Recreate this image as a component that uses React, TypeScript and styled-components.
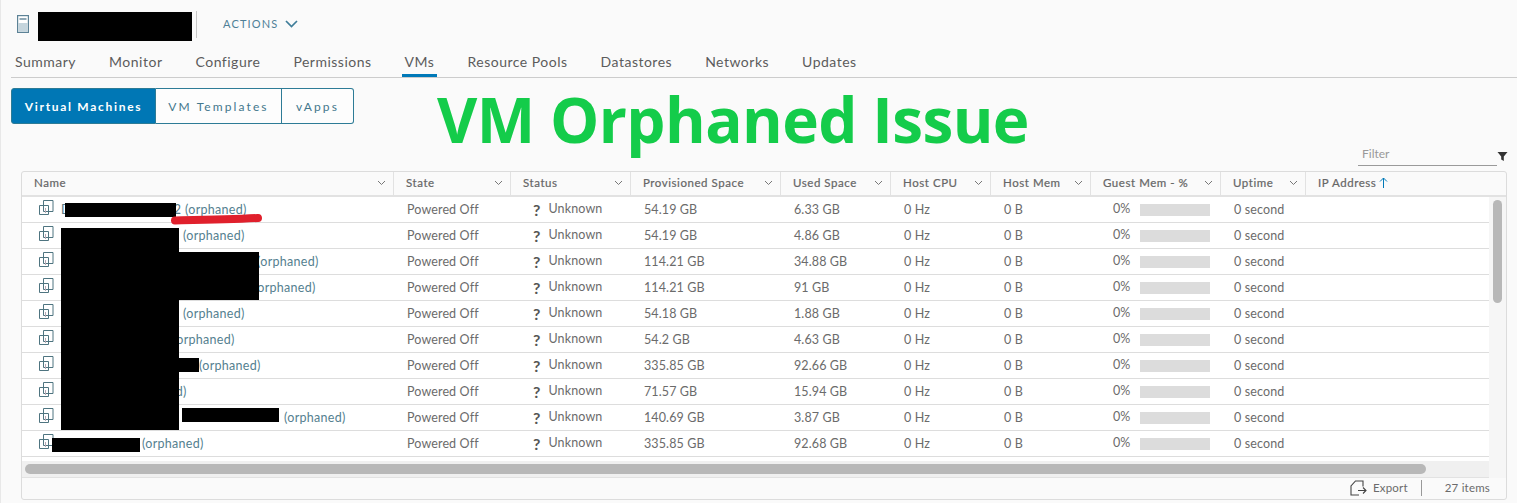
import React from "react";
import styled, { createGlobalStyle } from "styled-components";

const GlobalStyle = createGlobalStyle`
    html, body {
        margin: 0;
        padding: 0;
        background: #fafafa;
    }
    body {
        font-family: "Lato", "Liberation Sans", sans-serif;
        color: #666;
    }
`;

const COLUMNS = "372px 117px 120px 150px 110px 100px 100px 130px 85px 1fr";

const Page = styled.div`
    position: relative;
    width: 1517px;
    height: 503px;
    overflow: hidden;
    box-sizing: border-box;
    border-left: 1px solid #e8e8e8;
`;
const TopBar = styled.header`
    height: 39px;
    padding-top: 11px;
    display: flex;
    align-items: flex-start;
    box-sizing: content-box;
`;
const HostIcon = styled.svg`
    width: 12px;
    height: 18px;
    margin: 4px 0 0 16px;
`;
const TitleSlot = styled.div`
    width: 158px;
    height: 27px;
    border-right: 1px solid #c8c8c8;
    margin-left: 9px;
`;
const Actions = styled.button`
    margin: 6px 0 0 26px;
    padding: 0;
    border: 0;
    background: none;
    display: flex;
    align-items: center;
    gap: 7px;
    font: 11px "Lato", sans-serif;
    letter-spacing: 1.15px;
    color: #4f7f97;
`;
const Tabs = styled.nav`
    height: 28px;
    margin-left: 10px;
    padding-left: 4px;
    display: flex;
    gap: 33px;
    border-bottom: 1px solid #ccc;
    box-sizing: border-box;
`;
const Tab = styled.a<{ $current?: boolean }>`
    height: 27px;
    padding: 0 3px;
    margin: 0 -3px;
    line-height: 24px;
    font-size: 14px;
    letter-spacing: 0.5px;
    color: #5c5c5c;
    box-sizing: border-box;
    border-bottom: ${(props) => (props.$current ? "3px solid #0079b8" : "0")};
`;
const Switcher = styled.div`
    display: inline-flex;
    margin: 10px 0 0 10px;
    height: 36px;
    vertical-align: top;
`;
const SwitchButton = styled.button<{ $active?: boolean; $width: number }>`
    width: ${(props) => props.$width}px;
    height: 36px;
    padding: 0;
    border: 1px solid #2d7b96;
    border-left-width: ${(props) => (props.$active ? "1px" : "0")};
    background: ${(props) => (props.$active ? "#0077b5" : "#fdfdfd")};
    color: ${(props) => (props.$active ? "#fff" : "#43778c")};
    font: ${(props) => (props.$active ? 700 : 400)} 12px "Lato", sans-serif;
    letter-spacing: ${(props) => (props.$active ? "1.7px" : "2.1px")};
    &:first-child {
        border-radius: 3px 0 0 3px;
    }
    &:last-child {
        border-radius: 0 3px 3px 0;
    }
`;
const Annotation = styled.div`
    position: absolute;
    left: 436px;
    top: 77px;
    font: 700 62px "Open Sans", sans-serif;
    letter-spacing: -0.6px;
    color: #14cc4a;
    white-space: nowrap;
`;
const FilterRow = styled.div`
    margin-top: 21px;
    height: 21px;
    padding-right: 9px;
    display: flex;
    justify-content: flex-end;
    align-items: flex-end;
`;
const FilterInput = styled.div`
    width: 135px;
    height: 21px;
    padding-left: 4px;
    border-bottom: 1px solid #9a9a9a;
    font-size: 12px;
    line-height: 19px;
    color: #999;
`;
const FilterIcon = styled.svg`
    width: 11px;
    height: 11px;
    margin: 0 0 4px 0;
`;
const Grid = styled.section`
    margin: 5px 0 0 20px;
    width: 1486px;
    height: 329px;
    border: 1px solid #dcdcdc;
    border-radius: 3px;
    box-sizing: border-box;
    display: flex;
    flex-direction: column;
`;
const HeaderRow = styled.div`
    display: grid;
    grid-template-columns: ${COLUMNS};
    height: 23px;
    flex: none;
    border-bottom: 2px solid #e2e2e2;
    box-sizing: content-box;
`;
const HeaderCell = styled.div`
    display: flex;
    align-items: center;
    justify-content: space-between;
    padding: 0 7px 2px 12px;
    border-right: 1px solid #e2e2e2;
    font-size: 11.5px;
    letter-spacing: 0.55px;
    -webkit-text-stroke: 0.2px #666;
    color: #666;
    white-space: nowrap;
    &:last-child {
        border-right: 0;
        justify-content: flex-start;
        gap: 3px;
    }
`;
const Body = styled.div`
    flex: 1;
    min-height: 0;
    display: grid;
    grid-template-columns: 1fr 17px;
`;
const Left = styled.div`
    min-width: 0;
    display: flex;
    flex-direction: column;
`;
const Rows = styled.div`
    height: 264px;
    overflow: hidden;
    background: #fff;
`;
const Row = styled.div`
    display: grid;
    grid-template-columns: ${COLUMNS};
    height: 26px;
    border-bottom: 1px solid #ddd;
    box-sizing: border-box;
    align-items: center;
    font-size: 12.5px;
    letter-spacing: 0.12px;
    color: #6b6b6b;
    background: #fff;
`;
const NameCell = styled.div`
    display: flex;
    align-items: center;
    padding-left: 17px;
    white-space: nowrap;
`;
const VmIcon = styled.svg`
    width: 15px;
    height: 15px;
    margin: -5px 7px 0 0;
    flex: none;
`;
const HiddenName = styled.span<{ $width: number }>`
    width: ${(props) => props.$width}px;
    flex: none;
    display: flex;
    justify-content: space-between;
    padding-right: 4px;
    box-sizing: border-box;
    color: #557a88;
`;
const Orphaned = styled.a`
    color: #557f90;
    letter-spacing: 0.3px;
`;
const Cell = styled.div`
    padding-left: 13px;
    white-space: nowrap;
`;
const StatusCell = styled(Cell)`
    padding-left: 22px;
    display: flex;
    align-items: center;
    gap: 8px;
    margin-top: -2px;
`;
const Question = styled.b`
    font-size: 16px;
    line-height: 16px;
    color: #555;
    margin-top: 3px;
`;
const MemCell = styled.div`
    padding-left: 22px;
    display: flex;
    align-items: center;
    gap: 9px;
    margin-top: -2px;
`;
const MemBar = styled.div`
    width: 70px;
    height: 12px;
    margin-top: 2px;
    background: #dcdcdc;
`;
const PartialIcon = styled(VmIcon)`
    margin-top: 6px;
`;
const HScroll = styled.div`
    height: 17px;
    background: #f0f0f0;
    padding: 3px 0 0 3px;
    box-sizing: border-box;
    border-bottom: 1px solid #e2e2e2;
`;
const HThumb = styled.div`
    width: 1401px;
    height: 10px;
    border-radius: 5px;
    background: #b8b8b8;
`;
const VScroll = styled.div`
    background: #f6f6f6;
    padding: 3px 0 0 4px;
`;
const VThumb = styled.div`
    width: 9px;
    height: 103px;
    border-radius: 5px;
    background: #b8b8b8;
`;
const Footer = styled.footer`
    flex: none;
    height: 23px;
    display: flex;
    justify-content: flex-end;
    align-items: center;
    padding-right: 16px;
    font-size: 11.5px;
    letter-spacing: 0.2px;
    color: #6b6b6b;
`;
const ExportIcon = styled.svg`
    width: 17px;
    height: 16px;
    margin-right: 6px;
`;
const FooterDivider = styled.div`
    width: 1px;
    height: 16px;
    margin: 0 23px 0 13px;
    background: #999;
`;
const Redaction = styled.div<{ $x: number; $y: number; $w: number; $h: number }>`
    position: absolute;
    left: ${(props) => props.$x - 1}px;
    top: ${(props) => props.$y}px;
    width: ${(props) => props.$w}px;
    height: ${(props) => props.$h}px;
    background: #000;
`;
const RedMark = styled.svg`
    position: absolute;
    left: 169px;
    top: 212px;
    width: 94px;
    height: 14px;
`;

const tabs = [
    "Summary",
    "Monitor",
    "Configure",
    "Permissions",
    "VMs",
    "Resource Pools",
    "Datastores",
    "Networks",
    "Updates",
];
const headers = [
    "Name",
    "State",
    "Status",
    "Provisioned Space",
    "Used Space",
    "Host CPU",
    "Host Mem",
    "Guest Mem - %",
    "Uptime",
];

interface Ivm {
    nameWidth: number;
    head?: string;
    tail?: string;
    provisioned: string;
    used: string;
}

const vms: Ivm[] = [
    { nameWidth: 124, head: "D", tail: "2", provisioned: "54.19 GB", used: "6.33 GB" },
    { nameWidth: 122, provisioned: "54.19 GB", used: "4.86 GB" },
    { nameWidth: 196, provisioned: "114.21 GB", used: "34.88 GB" },
    { nameWidth: 193, provisioned: "114.21 GB", used: "91 GB" },
    { nameWidth: 122, provisioned: "54.18 GB", used: "1.88 GB" },
    { nameWidth: 112, provisioned: "54.2 GB", used: "4.63 GB" },
    { nameWidth: 138, provisioned: "335.85 GB", used: "92.66 GB" },
    { nameWidth: 64, provisioned: "71.57 GB", used: "15.94 GB" },
    { nameWidth: 223, provisioned: "140.69 GB", used: "3.87 GB" },
    { nameWidth: 81, provisioned: "335.85 GB", used: "92.68 GB" },
];

const redactions = [
    { x: 38, y: 12, w: 154, h: 29 },
    { x: 65, y: 203, w: 111, h: 14 },
    { x: 61, y: 228, w: 118, h: 202 },
    { x: 179, y: 252, w: 80, h: 48 },
    { x: 179, y: 358, w: 20, h: 14 },
    { x: 182, y: 408, w: 97, h: 14 },
    { x: 52, y: 438, w: 88, h: 14 },
];

const Chevron = () => (
    <svg width="9" height="6" viewBox="0 0 9 6">
        <path d="M1 1l3.5 3.5L8 1" fill="none" stroke="#777" strokeWidth="1" />
    </svg>
);

const VmGlyph = () => (
    <>
        <path d="M4.5 .5h9.5v11h-9.5z" fill="none" stroke="#4e7480" />
        <path d="M.5 5.5h9v9h-9z" fill="none" stroke="#4e7480" />
        <path d="M6.5 8v5" fill="none" stroke="#b9a8b4" />
    </>
);

const App = () => (
    <Page>
        <GlobalStyle />
        <TopBar>
            <HostIcon viewBox="0 0 12 18">
                <rect x=".6" y=".6" width="10.8" height="16.8" fill="#fff" stroke="#5c8296" strokeWidth="1.2" />
                <rect x="2.5" y="3" width="7" height="2" fill="#8fa8b6" />
                <rect x="1.2" y="8" width="9.6" height="8.8" fill="#c5d5dd" />
            </HostIcon>
            <TitleSlot />
            <Actions>
                ACTIONS
                <svg width="13" height="8" viewBox="0 0 13 8">
                    <path d="M1 1l5.5 5.5L12 1" fill="none" stroke="#3f7d99" strokeWidth="1.7" />
                </svg>
            </Actions>
        </TopBar>
        <Tabs>
            {tabs.map((tab) => (
                <Tab key={tab} $current={tab === "VMs"}>
                    {tab}
                </Tab>
            ))}
        </Tabs>
        <Switcher>
            <SwitchButton $active $width={145}>Virtual Machines</SwitchButton>
            <SwitchButton $width={126}>VM Templates</SwitchButton>
            <SwitchButton $width={72}>vApps</SwitchButton>
        </Switcher>
        <FilterRow>
            <FilterInput>Filter</FilterInput>
            <FilterIcon viewBox="0 0 11 11">
                <path d="M.5 1h10L6.8 5.5V10L4.2 8.5V5.5z" fill="#333" />
            </FilterIcon>
        </FilterRow>
        <Grid>
            <HeaderRow>
                {headers.map((header) => (
                    <HeaderCell key={header}>
                        {header}
                        <Chevron />
                    </HeaderCell>
                ))}
                <HeaderCell>
                    IP Address
                    <svg width="9" height="11" viewBox="0 0 9 11">
                        <path d="M4.5 11V1M1 4.5l3.5-3.5L8 4.5" fill="none" stroke="#0079b8" strokeWidth="1" />
                    </svg>
                </HeaderCell>
            </HeaderRow>
            <Body>
                <Left>
                    <Rows>
                        {vms.map((vm, index) => (
                            <Row key={index}>
                                <NameCell>
                                    <VmIcon viewBox="0 0 15 15">
                                        <VmGlyph />
                                    </VmIcon>
                                    <HiddenName $width={vm.nameWidth}>
                                        <span>{vm.head}</span>
                                        <span>{vm.tail}</span>
                                    </HiddenName>
                                    <Orphaned>(orphaned)</Orphaned>
                                </NameCell>
                                <Cell>Powered Off</Cell>
                                <StatusCell>
                                    <Question>?</Question>
                                    Unknown
                                </StatusCell>
                                <Cell>{vm.provisioned}</Cell>
                                <Cell>{vm.used}</Cell>
                                <Cell>0 Hz</Cell>
                                <Cell>0 B</Cell>
                                <MemCell>
                                    0%
                                    <MemBar />
                                </MemCell>
                                <Cell>0 second</Cell>
                                <Cell />
                            </Row>
                        ))}
                        <Row>
                            <NameCell>
                                <PartialIcon viewBox="0 0 15 15">
                                    <VmGlyph />
                                </PartialIcon>
                            </NameCell>
                        </Row>
                    </Rows>
                    <HScroll>
                        <HThumb />
                    </HScroll>
                </Left>
                <VScroll>
                    <VThumb />
                </VScroll>
            </Body>
            <Footer>
                <ExportIcon viewBox="0 0 17 16">
                    <path d="M9 15H1V6l4.5-5H13v5.5" fill="none" stroke="#444" strokeWidth="1.1" />
                    <path d="M8 10.5h8M13 7.5l3 3-3 3" fill="none" stroke="#444" strokeWidth="1.1" />
                </ExportIcon>
                Export
                <FooterDivider />
                27 items
            </Footer>
        </Grid>
        <Annotation>VM Orphaned Issue</Annotation>
        {redactions.map((box) => (
            <Redaction key={`${box.x}-${box.y}`} $x={box.x} $y={box.y} $w={box.w} $h={box.h} />
        ))}
        <RedMark viewBox="0 0 94 14">
            <path d="M5 8.5C30 8 60 7.5 88 6" fill="none" stroke="#e0202c" strokeWidth="8" strokeLinecap="round" />
        </RedMark>
    </Page>
);

export default App;
